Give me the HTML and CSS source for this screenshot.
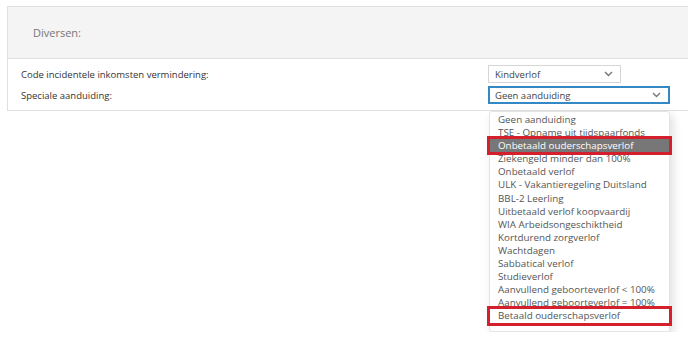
FILE: index.html
```html
<!DOCTYPE html>
<html lang="nl">
<head>
    <meta charset="UTF-8">
    <title>Diversen</title>
    <link rel="stylesheet" href="styles.css">
</head>
<body>
    <div class="panel">
        <div class="panel-head">Diversen:</div>
        <div class="panel-body">
            <div class="row">
                <span class="row-label">Code incidentele inkomsten vermindering:</span>
                <div class="select select-short">
                    <span>Kindverlof</span>
                    <svg class="chevron" width="9" height="6" viewBox="0 0 9 6"><path d="M1 1 L4.5 4.5 L8 1" fill="none" stroke="#777" stroke-width="1.4"/></svg>
                </div>
            </div>
            <div class="row">
                <span class="row-label">Speciale aanduiding:</span>
                <div class="select select-open">
                    <span>Geen aanduiding</span>
                    <svg class="chevron" width="9" height="6" viewBox="0 0 9 6"><path d="M1 1 L4.5 4.5 L8 1" fill="none" stroke="#777" stroke-width="1.4"/></svg>
                </div>
            </div>
        </div>
    </div>
    <div class="choice-list">
        <div class="choice">Geen aanduiding</div>
        <div class="choice">TSE - Opname uit tijdspaarfonds</div>
        <div class="choice marked active">Onbetaald ouderschapsverlof</div>
        <div class="choice">Ziekengeld minder dan 100%</div>
        <div class="choice">Onbetaald verlof</div>
        <div class="choice">ULK - Vakantieregeling Duitsland</div>
        <div class="choice">BBL-2 Leerling</div>
        <div class="choice">Uitbetaald verlof koopvaardij</div>
        <div class="choice">WIA Arbeidsongeschiktheid</div>
        <div class="choice">Kortdurend zorgverlof</div>
        <div class="choice">Wachtdagen</div>
        <div class="choice">Sabbatical verlof</div>
        <div class="choice">Studieverlof</div>
        <div class="choice">Aanvullend geboorteverlof &lt; 100%</div>
        <div class="choice">Aanvullend geboorteverlof = 100%</div>
        <div class="choice marked">Betaald ouderschapsverlof</div>
    </div>
</body>
</html>
```

FILE: styles.css
```css
body {
    margin: 0;
    font-family: "Open Sans", "Noto Sans", sans-serif;
    background-color: #fff;
    color: #333;
}

.panel {
    margin: 6px 0 0 7px;
    border: 1px solid #e0e0e0;
    border-right: none;
}

.panel-head {
    height: 51px;
    background-color: #f4f4f4;
    border-bottom: 1px solid #e0e0e0;
    padding-left: 25px;
    display: flex;
    align-items: center;
    font-size: 11px;
    color: #777;
}

.panel-body {
    padding: 6px 0 6px 13px;
    display: flex;
    flex-direction: column;
    gap: 3px;
}

.row {
    display: grid;
    grid-template-columns: 467px auto;
    align-items: center;
}

.row-label {
    font-size: 9.5px;
    color: #333;
}

.select {
    box-sizing: border-box;
    height: 18px;
    border: 1px solid #d6d6d6;
    background-color: #fff;
    display: flex;
    align-items: center;
    justify-content: space-between;
    padding: 0 7px 0 6px;
    font-size: 9.5px;
    color: #444;
}

.select-short {
    width: 133px;
}

.select-open {
    width: 182px;
    border: 2px solid #3489c4;
    padding-left: 5px;
}

.chevron {
    display: block;
}

/* open list of the second select, sits right under the panel */
.choice-list {
    width: 179px;
    margin: 0 0 0 489px;
    padding: 1px 0 8px;
    background-color: #fff;
    border: 1px solid #e4e4e4;
    border-radius: 3px;
    box-shadow: 3px 4px 10px rgba(0, 0, 0, 0.13);
    font-size: 9.8px;
    color: #555;
}

.choice {
    height: 13.1px;
    line-height: 13.1px;
    padding-left: 8px;
    white-space: nowrap;
}

.choice.active {
    background-color: #777;
    color: #fff;
}

.choice.marked {
    outline: 3px solid #d3202c;
    outline-offset: 0;
}
```
